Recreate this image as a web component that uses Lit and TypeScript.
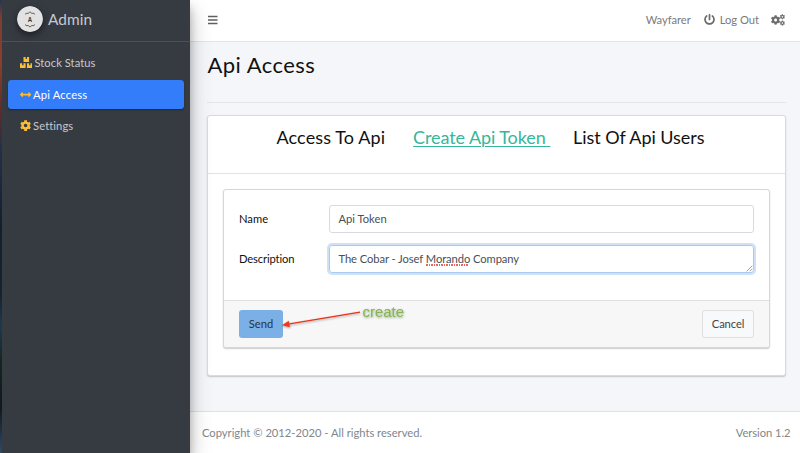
import { LitElement, html, svg, css } from "lit";
import { customElement } from "lit/decorators.js";

const COG =
  "M487.4 315.7l-42.6-24.6c4.3-23.2 4.3-47 0-70.2l42.6-24.6c4.9-2.8 7.1-8.6 5.5-14-11.1-35.6-30-67.8-54.7-94.6-3.8-4.1-10-5.1-14.8-2.3L380.8 110c-17.9-15.4-38.5-27.3-60.8-35.1V25.8c0-5.6-3.9-10.5-9.4-11.7-36.7-8.2-74.3-7.8-109.2 0-5.5 1.2-9.4 6.1-9.4 11.7V75c-22.2 7.9-42.8 19.8-60.8 35.1L88.7 85.5c-4.9-2.8-11-1.9-14.8 2.3-24.7 26.7-43.6 58.9-54.7 94.6-1.7 5.4.6 11.2 5.5 14L67.3 221c-4.3 23.2-4.3 47 0 70.2l-42.6 24.6c-4.9 2.8-7.1 8.6-5.5 14 11.1 35.6 30 67.8 54.7 94.6 3.8 4.1 10 5.1 14.8 2.3l42.6-24.6c17.9 15.4 38.5 27.3 60.8 35.1v49.2c0 5.6 3.9 10.5 9.4 11.7 36.7 8.2 74.3 7.8 109.2 0 5.5-1.2 9.4-6.1 9.4-11.7v-49.2c22.2-7.9 42.8-19.8 60.8-35.1l42.6 24.6c4.9 2.8 11 1.9 14.8-2.3 24.7-26.7 43.6-58.9 54.7-94.6 1.5-5.5-.7-11.3-5.6-14.1zM256 336c-44.1 0-80-35.9-80-80s35.9-80 80-80 80 35.9 80 80-35.9 80-80 80z";
const POWER =
  "M400 54.1c63 45 104 118.6 104 201.9 0 136.8-110.8 247.7-247.5 248C120 504.3 8.2 393 8 256.4 7.9 173.1 48.9 99.3 111.8 54.2c11.7-8.3 28-4.8 35 7.7L162.6 90c5.9 10.5 3.1 23.8-6.6 31-41.5 30.8-68 79.6-68 134.9-.1 92.3 74.5 168.1 168 168.1 91.6 0 168.6-74.2 168-169.1-.3-51.8-24.7-101.8-68.1-134-9.7-7.2-12.4-20.5-6.5-30.9l15.8-28.1c7-12.4 23.2-16.1 34.8-7.8zM296 264V24c0-13.3-10.7-24-24-24h-32c-13.3 0-24 10.7-24 24v240c0 13.3 10.7 24 24 24h32c13.3 0 24-10.7 24-24z";
const BOXES =
  "M560 288h-80v96l-32-21.3-32 21.3v-96h-80c-8.8 0-16 7.2-16 16v192c0 8.8 7.2 16 16 16h224c8.8 0 16-7.2 16-16V304c0-8.8-7.2-16-16-16zm-384-64h224c8.8 0 16-7.2 16-16V16c0-8.8-7.2-16-16-16h-80v96l-32-21.3L256 96V0h-80c-8.8 0-16 7.2-16 16v192c0 8.8 7.2 16 16 16zm64 64h-80v96l-32-21.3L96 384v-96H16c-8.8 0-16 7.2-16 16v192c0 8.8 7.2 16 16 16h224c8.8 0 16-7.2 16-16V304c0-8.8-7.2-16-16-16z";
const ARROWS =
  "M377.941 169.941V216H134.059v-46.059c0-21.382-25.851-32.09-40.971-16.971L7.029 239.029c-9.373 9.373-9.373 24.568 0 33.941l86.059 86.059c15.119 15.119 40.971 4.411 40.971-16.971V296h243.882v46.059c0 21.382 25.851 32.09 40.971 16.971l86.059-86.059c9.373-9.373 9.373-24.568 0-33.941l-86.059-86.059c-15.119-15.12-40.971-4.412-40.971 16.97z";

@customElement("side-bar")
class SideBar extends LitElement {
  static styles = css`
    :host { display: flex; flex: none; width: 190px; background: #363b42; box-sizing: border-box;
      box-shadow: 0 10px 20px rgba(0,0,0,.25), 0 7px 8px rgba(0,0,0,.22); z-index: 2; color: #c5c9cf; }
    .edge { width: 2px; flex: none; background: linear-gradient(#26364f 0, #7a3f33 4%, #8d3e2c 14%, #5a2c2a 25%, #23304a 33%, #131f2c 50%, #16232f 65%, #1e3a50 72%, #14251e 80%, #101820 90%, #2d4a66 100%); }
    .inner { flex: 1; min-width: 0; }
    .brand { height: 42px; box-sizing: border-box; border-bottom: 1px solid #4b5058; display: flex; align-items: center; padding: 0 0 3px 15px; margin-bottom: 6px; font-size: 15.4px; letter-spacing: .05px; }
    .logo { width: 26px; height: 26px; border-radius: 50%; margin-right: 5px; box-shadow: 0 3px 7px rgba(0,0,0,.5); display: block; flex: none; }
    .item { height: 29px; margin: 0 6px 2.7px 5.5px; padding-left: 12px; display: flex; align-items: center; border-radius: 3.5px; font-size: 11.2px; }
    .item svg { fill: #fcbd33; display: block; flex: none; }
    .on { background: #337dfa; color: #fff; box-shadow: 0 1px 2px rgba(0,0,0,.35); }
    .boxes { width: 12.6px; height: 11.2px; margin-right: 2.4px; }
    .sq { width: 11.2px; height: 11.2px; margin-right: 2.4px; }
    .t1 { letter-spacing: .04px; }
    .t2 { letter-spacing: .17px; }
    .t3 { letter-spacing: .08px; }
  `;
  render() {
    return html`
      <div class="edge"></div>
      <div class="inner">
        <div class="brand">
          <svg class="logo" viewBox="0 0 26 26">
            <circle cx="13" cy="13" r="13" fill="#e2e2e2"></circle>
            <path d="M8 8.3l2-1.3 1 .6 2-1.8 2 1.8 1-.6 2 1.3M8 18.6l2 1.3 1-.6 2 1.8 2-1.8 1 .6 2-1.3" fill="none" stroke="#555" stroke-width=".9"></path>
            <text x="13" y="16" text-anchor="middle" font-family="Liberation Sans, sans-serif" font-weight="700" font-size="7.5" textLength="4.4" lengthAdjust="spacingAndGlyphs" fill="#3d352f">A</text>
          </svg>
          <span>Admin</span>
        </div>
        <div class="item"><svg class="boxes" viewBox="0 0 576 512"><path d=${BOXES}></path></svg><span class="t1">Stock Status</span></div>
        <div class="item on"><svg class="sq" viewBox="0 0 512 512"><path d=${ARROWS}></path></svg><span class="t2">Api Access</span></div>
        <div class="item"><svg class="sq" viewBox="0 0 512 512"><path d=${COG}></path></svg><span class="t3">Settings</span></div>
      </div>`;
  }
}

@customElement("top-bar")
class TopBar extends LitElement {
  static styles = css`
    :host { height: 42px; box-sizing: border-box; border-bottom: 1px solid #e3e5e8; background: #fff; display: flex; align-items: center; padding: 0 15px 2px 18px; color: #7b7b7b; font-size: 11.2px; flex: none; }
    .bars { width: 10px; height: 10px; margin-right: auto; display: block; }
    .user { letter-spacing: -.05px; }
    .power { width: 11px; height: 11px; margin: 0 4.5px 0 13.5px; fill: #6c6c6c; }
    .out { letter-spacing: -.02px; }
    .cogs { width: 14px; height: 12px; margin-left: 12px; fill: #6c6c6c; }
  `;
  render() {
    return html`
      <svg class="bars" viewBox="0 0 10 10"><path d="M0 1.5H9.5M0 5H9.5M0 8.5H9.5" stroke="#5f5f5f" stroke-width="1.3"></path></svg>
      <span class="user">Wayfarer</span>
      <svg class="power" viewBox="0 0 512 512"><path d=${POWER}></path></svg>
      <span class="out">Log Out</span>
      <svg class="cogs" viewBox="0 0 14 12">
        ${svg`<path d=${COG} transform="translate(-.2 1.2) scale(.0188)"></path>
        <path d=${COG} transform="translate(8.8 .2) scale(.0102)"></path>
        <path d=${COG} transform="translate(8.8 6.5) scale(.0102)"></path>`}
      </svg>`;
  }
}

@customElement("token-form")
class TokenForm extends LitElement {
  static styles = css`
    :host { display: block; height: 159px; box-sizing: border-box; border: 1px solid #d5d7d9; border-radius: 3px; background: #fff; box-shadow: 0 1px 1.5px rgba(0,0,0,.2); font-size: 11.2px; color: #111; }
    .body { height: 110px; box-sizing: border-box; padding: 15px 15px 0; display: grid; grid-template-columns: 90px 1fr; grid-auto-rows: 28px; row-gap: 12px; align-items: center; }
    .label { padding-bottom: 2px; }
    .field { height: 28px; box-sizing: border-box; border: 1px solid #d7dbe0; border-radius: 3px; padding: 0 9px 1px 8.5px; display: flex; align-items: center; color: #495057; position: relative; white-space: pre; }
    .focus { border-color: #a9cbee; box-shadow: 0 0 0 2px #cfe1f5; padding-bottom: 2px; }
    .l2 { letter-spacing: -.13px; }
    .v2 { letter-spacing: -.075px; }
    .typo { position: relative; }
    .typo::after { content: ""; position: absolute; left: 0; right: 1px; bottom: -1px; height: 1.5px; background: repeating-linear-gradient(90deg, #f0625c 0 1.5px, transparent 1.5px 2.5px); }
    .grip { position: absolute; right: 0; bottom: 0; width: 7px; height: 7px; }
    .foot { height: 47px; box-sizing: border-box; border-top: 1px solid #dfdfdf; background: #f7f7f7; border-radius: 0 0 3px 3px; padding: 0 15px; display: flex; align-items: center; justify-content: space-between; position: relative; }
    .btn { height: 28px; box-sizing: border-box; border-radius: 3px; display: flex; align-items: center; justify-content: center; padding-bottom: 2px; }
    .send { width: 44px; background: #7bb0e7; color: #29333d; }
    .cancel { width: 52px; background: #f8f9fb; border: 1px solid #dedfe1; color: #444; }
    .b2 { letter-spacing: -.1px; }
    .note { position: absolute; left: 57px; top: 2px; width: 130px; height: 30px; overflow: visible; }
  `;
  render() {
    return html`
      <div class="body">
        <div class="label l1">Name</div>
        <div class="field"><span class="v1">Api Token</span></div>
        <div class="label l2">Description</div>
        <div class="field focus"><span class="v2">The Cobar - Josef <span class="typo">Morando</span> Company</span>
          <svg class="grip" viewBox="0 0 7 7"><path d="M.7 6.3L6.3 .7M3.7 6.3L6.3 3.7" stroke="#888" stroke-width=".8"></path></svg>
        </div>
      </div>
      <div class="foot">
        <div class="btn send"><span class="b1">Send</span></div>
        <div class="btn cancel"><span class="b2">Cancel</span></div>
        <svg class="note" viewBox="0 0 130 30">
          <defs><filter id="s" x="-20%" y="-50%" width="140%" height="220%"><feDropShadow dx=".4" dy="1" stdDeviation=".8" flood-opacity=".35"></feDropShadow></filter></defs>
          <g filter="url(#s)">
            <path d="M79 9.2L7 21.2" stroke="#e8331a" stroke-width="1.3"></path>
            <path d="M.8 22.3L7.8 17.8L8.9 24.3Z" fill="#f0391c"></path>
            <text x="81.5" y="14" font-family="Liberation Sans, sans-serif" font-size="15" textLength="41.5" lengthAdjust="spacingAndGlyphs" fill="#86b551" stroke="#86b551" stroke-width=".15">create</text>
          </g>
        </svg>
      </div>`;
  }
}

@customElement("app-root")
class AppRoot extends LitElement {
  static styles = css`
    :host { display: flex; width: 800px; height: 453px; overflow: hidden; font-family: Lato, "Open Sans", sans-serif; background: #f4f6fa; white-space: nowrap; }
    .main { flex: 1; min-width: 0; display: flex; flex-direction: column; }
    .content { flex: 1; padding: 0 14px 0 17px; display: flex; flex-direction: column; }
    h1 { margin: 0; font-weight: 400; font-size: 22px; line-height: 28px; height: 61px; box-sizing: border-box; padding: 9px 0 0 .5px; border-bottom: 1px solid #e3e5e8; color: #111; letter-spacing: .46px; }
    .card { margin-top: 12px; height: 261px; box-sizing: border-box; border: 1px solid #d9dbde; border-radius: 3px; background: #fff; box-shadow: 0 1px 1.5px rgba(0,0,0,.2); }
    .tabs { height: 58px; box-sizing: border-box; border-bottom: 1px solid #e1e3e5; display: flex; padding: 8px 0 0 68.5px; font-size: 18px; line-height: 26px; color: #111; }
    .tab { flex: none; white-space: pre; }
    .a { width: 136.5px; letter-spacing: .12px; } .b { width: 160px; letter-spacing: -.07px; }
    .c { letter-spacing: -.05px; }
    .b span { color: #35b79b; text-decoration: underline; text-underline-offset: 2px; text-decoration-thickness: 1px; }
    token-form { margin: 15px 15px 0; }
    footer { height: 42px; box-sizing: border-box; border-top: 1px solid #dfe2e7; background: #fff; color: #7f868d; font-size: 11.2px; display: flex; justify-content: space-between; align-items: center; padding: 0 9.5px 0 12px; }
    .f2 { letter-spacing: -.05px; }
  `;
  render() {
    return html`
      <side-bar></side-bar>
      <div class="main">
        <top-bar></top-bar>
        <div class="content">
          <h1><span class="h">Api Access</span></h1>
          <div class="card">
            <div class="tabs">
              <div class="tab a"><span>Access To Api</span></div>
              <div class="tab b"><span>Create Api Token </span></div>
              <div class="tab c"><span>List Of Api Users</span></div>
            </div>
            <token-form></token-form>
          </div>
        </div>
        <footer><span class="f1">Copyright © 2012-2020 - All rights reserved.</span><span class="f2">Version 1.2</span></footer>
      </div>`;
  }
}
